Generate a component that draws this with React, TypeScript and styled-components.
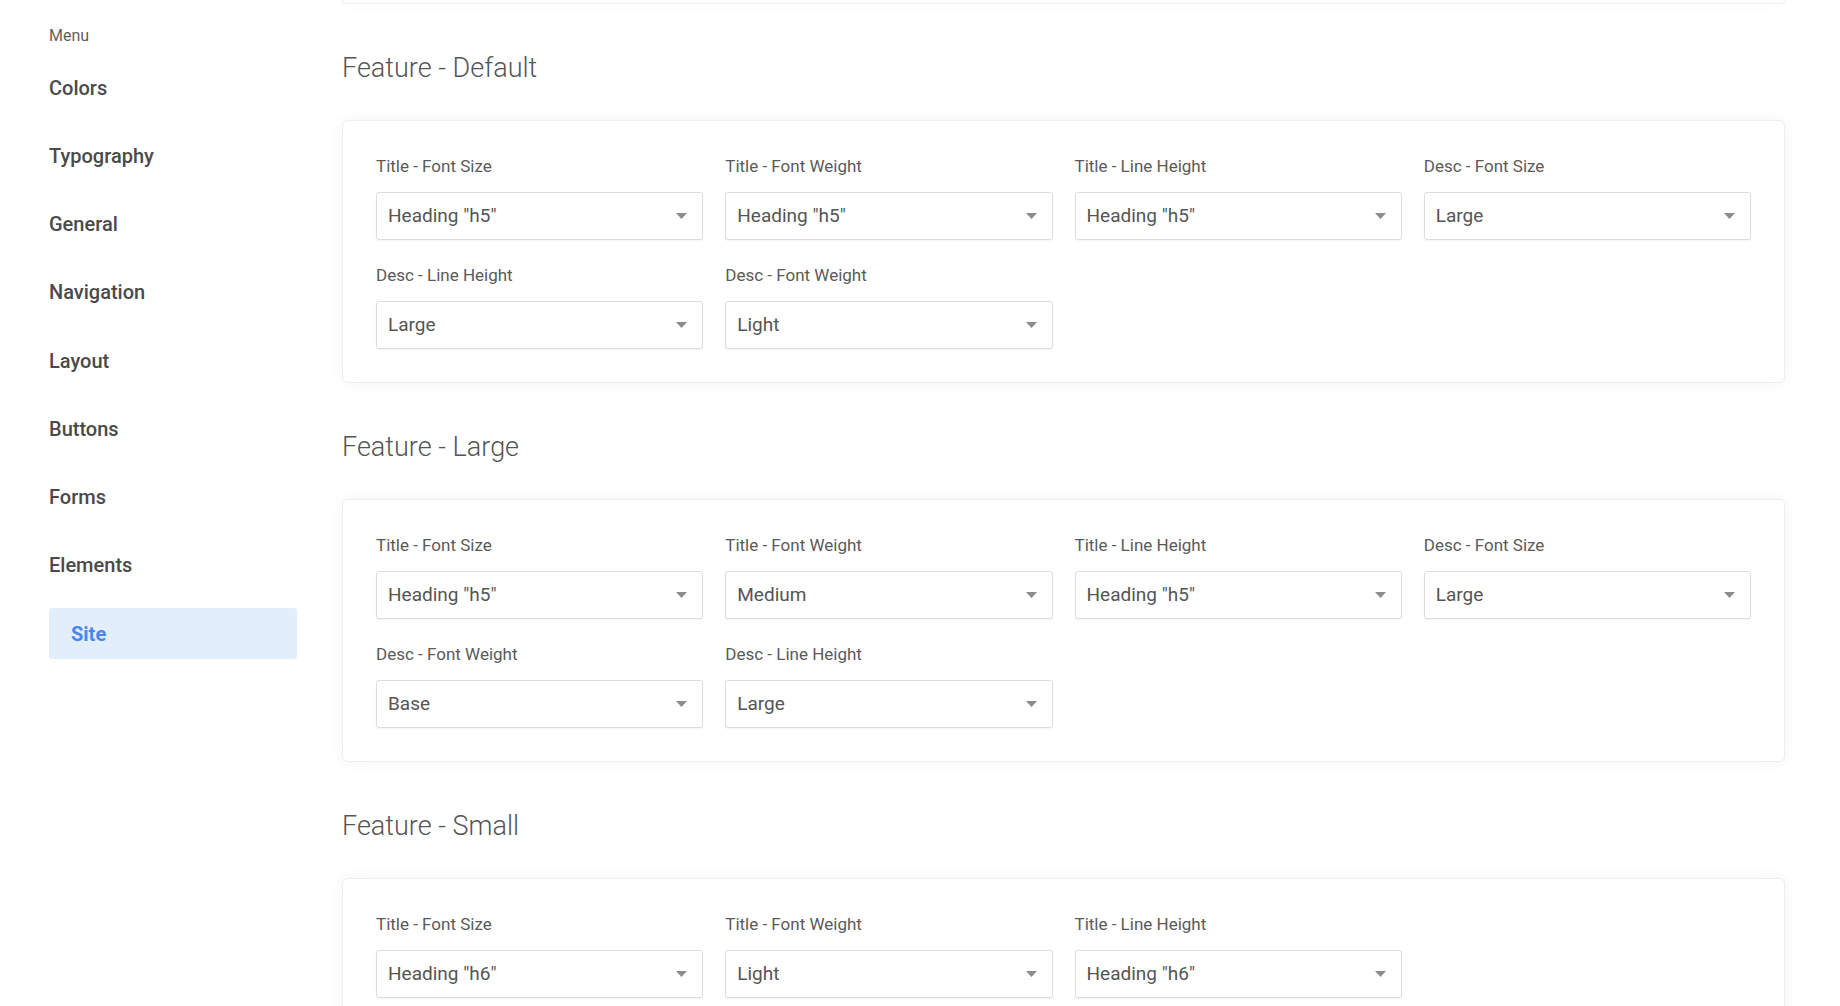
import styled, {createGlobalStyle} from "styled-components";

const GlobalStyle = createGlobalStyle`
    html, body {
        margin: 0;
        padding: 0;
        background: #ffffff;
        font-family: Roboto, "Liberation Sans", sans-serif;
    }
    * {
        box-sizing: border-box;
    }
`

type Field = { label: string; value: string }
type Section = { title: string; fields: Field[] }

const NAV = ['Colors', 'Typography', 'General', 'Navigation', 'Layout', 'Buttons', 'Forms', 'Elements', 'Site']

const SECTIONS: Section[] = [
    {
        title: 'Feature - Default',
        fields: [
            {label: 'Title - Font Size', value: 'Heading "h5"'},
            {label: 'Title - Font Weight', value: 'Heading "h5"'},
            {label: 'Title - Line Height', value: 'Heading "h5"'},
            {label: 'Desc - Font Size', value: 'Large'},
            {label: 'Desc - Line Height', value: 'Large'},
            {label: 'Desc - Font Weight', value: 'Light'},
        ],
    },
    {
        title: 'Feature - Large',
        fields: [
            {label: 'Title - Font Size', value: 'Heading "h5"'},
            {label: 'Title - Font Weight', value: 'Medium'},
            {label: 'Title - Line Height', value: 'Heading "h5"'},
            {label: 'Desc - Font Size', value: 'Large'},
            {label: 'Desc - Font Weight', value: 'Base'},
            {label: 'Desc - Line Height', value: 'Large'},
        ],
    },
    {
        title: 'Feature - Small',
        fields: [
            {label: 'Title - Font Size', value: 'Heading "h6"'},
            {label: 'Title - Font Weight', value: 'Light'},
            {label: 'Title - Line Height', value: 'Heading "h6"'},
        ],
    },
]

const Page = styled.div`
    display: flex;
    align-items: flex-start;
    width: 100%;
    height: 1006px;
    overflow: hidden;
`

const Sidebar = styled.aside`
    flex: 0 0 343px;
    padding: 26px 46px 0 49px;
`

const MenuLabel = styled.div`
    font-size: 16px;
    line-height: 20px;
    color: #5f5f5f;
    margin-bottom: 16px;
`

const NavList = styled.nav`
    display: flex;
    flex-direction: column;
    gap: 17.25px;
`

const NavItem = styled.a<{ active?: boolean }>`
    display: flex;
    align-items: center;
    height: 51px;
    padding-left: ${({active}) => active ? '22px' : '0'};
    border-radius: 3px;
    font-size: 20px;
    font-weight: ${({active}) => active ? 700 : 500};
    color: ${({active}) => active ? '#4a86f0' : '#4a4a4a'};
    background: ${({active}) => active ? '#e3eefc' : 'transparent'};
    text-decoration: none;
    cursor: pointer;
`

const Main = styled.main`
    flex: 0 0 1443px;
    margin-left: -1px;
    display: flex;
    flex-direction: column;
`

const Card = styled.div`
    background: #ffffff;
    border: 1px solid #eeeeee;
    border-radius: 6px;
    box-shadow: 0 0 14px rgba(0, 0, 0, 0.05);
`

const CardTail = styled(Card)`
    height: 4px;
    border-top: none;
    border-radius: 0 0 6px 6px;
`

const SectionTitle = styled.h2`
    margin: 48px 0 36px 0;
    font-size: 27px;
    line-height: 32px;
    font-weight: 300;
    color: #555555;
`

const FieldGrid = styled(Card)`
    display: grid;
    grid-template-columns: repeat(4, 1fr);
    column-gap: 22px;
    row-gap: 25px;
    padding: 35px 33px 33px 33px;
`

const FieldBox = styled.div`
    display: flex;
    flex-direction: column;
    min-width: 0;
`

const Label = styled.label`
    font-size: 17px;
    line-height: 20px;
    color: #5a5a5a;
    margin-bottom: 16px;
`

const SelectBox = styled.div`
    display: flex;
    align-items: center;
    justify-content: space-between;
    height: 48px;
    padding: 0 15px 0 11px;
    border: 1px solid #dddddd;
    border-radius: 3px;
    box-shadow: 0 1px 2px rgba(0, 0, 0, 0.05);
    background: #ffffff;
    font-size: 19px;
    line-height: 22px;
    color: #555555;
    cursor: pointer;
`

const Caret = styled.svg`
    width: 11px;
    height: 6px;
    flex: 0 0 auto;
`

const SelectField = ({label, value}: Field) => (
    <FieldBox>
        <Label>{label}</Label>
        <SelectBox>
            <span>{value}</span>
            <Caret viewBox="0 0 11 6">
                <path d="M0 0 L11 0 L5.5 6 Z" fill="#8c8c8c"/>
            </Caret>
        </SelectBox>
    </FieldBox>
)

export default function App() {
    return (
        <>
            <GlobalStyle/>
            <Page>
                <Sidebar>
                    <MenuLabel>Menu</MenuLabel>
                    <NavList>
                        {NAV.map((item) => (
                            <NavItem key={item} active={item === 'Site'}>{item}</NavItem>
                        ))}
                    </NavList>
                </Sidebar>
                <Main>
                    <CardTail/>
                    {SECTIONS.map((section) => (
                        <div key={section.title}>
                            <SectionTitle>{section.title}</SectionTitle>
                            <FieldGrid>
                                {section.fields.map((field) => (
                                    <SelectField key={field.label} {...field}/>
                                ))}
                            </FieldGrid>
                        </div>
                    ))}
                </Main>
            </Page>
        </>
    )
}
